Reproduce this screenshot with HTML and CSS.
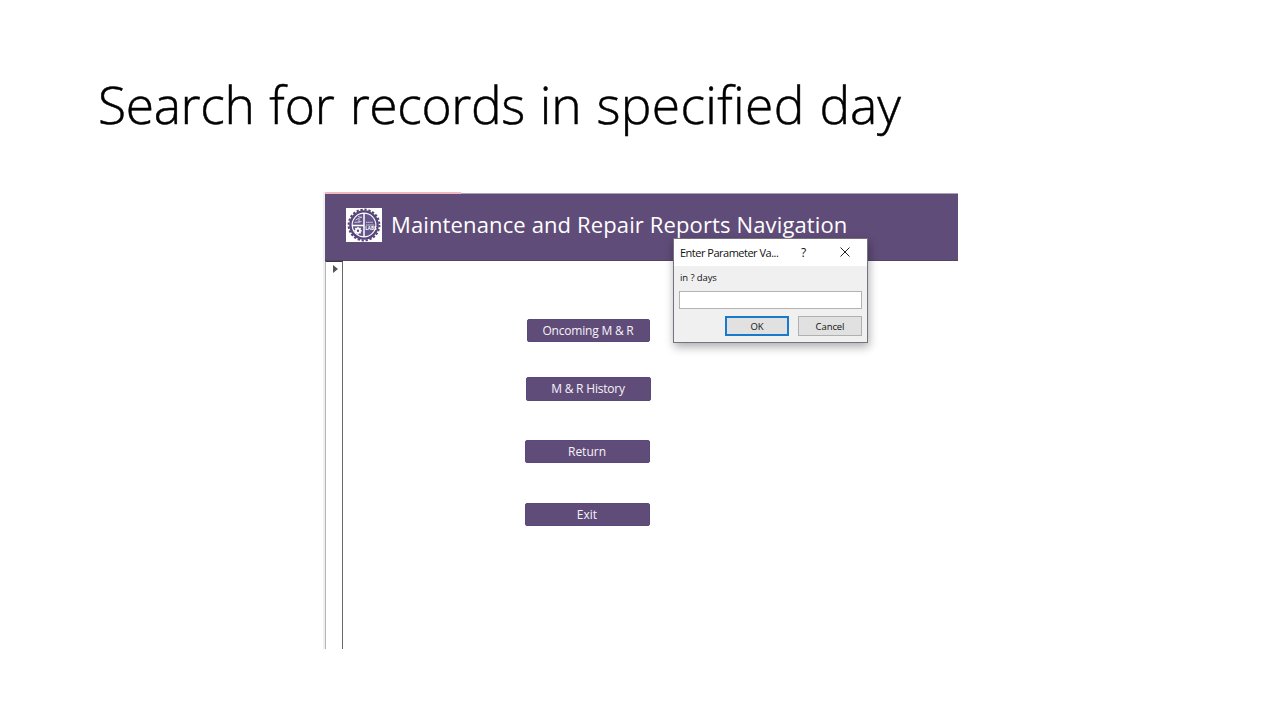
FILE: index.html
```html
<!DOCTYPE html>
<html lang="en">
<head>
<meta charset="utf-8">
<title>Search for records in specified day</title>
<link rel="stylesheet" href="styles.css">
</head>
<body>
<main class="slide">
  <h1 class="slide-title"><span class="tight">Search</span> for <span class="tight">records</span> in <span class="wide">specified</span> day</h1>
  <section class="app">
    <div class="tab-edge"><span class="tab-active"></span></div>
    <header class="app-header">
      <svg class="logo" viewBox="0 0 36 34">
        <rect width="36" height="34" fill="#fff"/>
        <circle cx="18" cy="17" r="15.400" fill="none" stroke="#57467a" stroke-width="2" stroke-dasharray="2.300 1.730"/>
        <circle cx="18" cy="17" r="13.600" fill="#fff" stroke="#57467a" stroke-width="2.400"/>
        <circle cx="18" cy="17" r="11.300" fill="#65568a"/>
        <path d="M18 5v24M6 17.500h12" stroke="#fff" stroke-width="1.500"/>
        <path d="M8.500 14.500l7-1M9.500 12l6-3M12 8.500l4 1M13 11v4" stroke="#d5cee2" stroke-width=".9" fill="none"/>
        <path d="M12 19v7.400M8.300 22.700h7.400M9.400 20.100l5.200 5.200M14.600 20.100l-5.200 5.200" stroke="#fff" stroke-width="1.500"/>
        <circle cx="12" cy="22.700" r="2" fill="#57467a" stroke="#fff" stroke-width="1.600"/>
        <path d="M20 14.300h7M20 17h8" stroke="#d9d3e5" stroke-width="1" stroke-dasharray="1.600 .5"/>
        <text x="19.300" y="22.300" class="logo-text">LABS</text>
      </svg>
      <h2 class="app-title">Maintenance and Repair Reports Navigation</h2>
    </header>
    <div class="app-body">
      <div class="record-selector">
        <svg class="arrow" viewBox="0 0 5 8"><path d="M0 0l5 4-5 4z" fill="#555"/></svg>
      </div>
      <nav class="menu">
        <button class="nav-btn first">Oncoming M &amp; R</button>
        <button class="nav-btn second">M &amp; R History</button>
        <button class="nav-btn third">Return</button>
        <button class="nav-btn fourth">Exit</button>
      </nav>
    </div>
    <div class="dialog" role="dialog">
      <div class="dialog-bar">
        <span class="dialog-title">Enter Parameter Va...</span>
        <span class="help">?</span>
        <svg class="close" viewBox="0 0 10 10"><path d="M.5 .5l9 9M9.500 .5l-9 9" stroke="#222" fill="none"/></svg>
      </div>
      <div class="dialog-body">
        <label class="prompt" for="days">in ? days</label>
        <input class="field" id="days">
        <div class="actions">
          <button class="btn default">OK</button>
          <button class="btn">Cancel</button>
        </div>
      </div>
    </div>
  </section>
</main>
</body>
</html>
```
FILE: styles.css
```css
* { box-sizing: border-box; }
body { margin: 0; background: #fff; font-family: "Open Sans", "Noto Sans", sans-serif; }
.slide { width: 1280px; height: 720px; padding: 67px 0 0 98px; overflow: hidden; }
.slide-title { margin: 0 0 49px; height: 76px; width: max-content; font-size: 51.500px; font-weight: 300; line-height: 75px; color: #000; white-space: nowrap; letter-spacing: -.02px; word-spacing: 1.400px; -webkit-text-stroke: .5px #000; }
.tight { letter-spacing: -.35px; }
.wide { letter-spacing: .35px; }
.app { position: relative; width: 635px; height: 457px; margin-left: 225px; border-left: 2px solid #eef0f3; }
.tab-edge { height: 2px; border-bottom: 1px solid #a9a2b5; }
.tab-active { display: block; width: 136px; height: 2px; background: #f2b8c0; }
.app-header { display: flex; align-items: flex-start; height: 67px; padding: 14px 0 0 21px; background: #604c78; border-bottom: 1px solid #514560; }
.logo { width: 36px; height: 34px; flex: none; }
.logo-text { font: 700 4.500px "Open Sans", sans-serif; fill: #fff; }
.app-title { margin: 0 0 0 9px; font-size: 22px; font-weight: 400; line-height: 32px; color: #fff; white-space: nowrap; letter-spacing: .13px; }
.app-body { display: flex; height: 388px; }
.record-selector { width: 18px; border-left: 1px solid #b5b5b5; border-right: 1px solid #686868; border-top: 1px solid #3c3545; padding: 3px 0 0 7px; }
.arrow { display: block; width: 5px; height: 8px; }
.menu { display: flex; flex-direction: column; padding: 58px 0 0 182px; }
.nav-btn { width: 125px; height: 23px; padding: 0 1px 0 0; border: 1px solid #57497c; border-radius: 2px; background: #604c78; color: #f6f3f9; font: 400 12px/20px "Open Sans", sans-serif; }
.first { width: 123px; margin: 0 0 35px 2px; letter-spacing: -.2px; }
.second { height: 24px; margin: 0 0 39px 1px; letter-spacing: -.2px; }
.third { margin-bottom: 40px; }
.dialog { position: absolute; left: 348px; top: 46px; width: 195px; height: 105px; background: #f0f0f0; border: 1px solid #77717f; box-shadow: 1px 4px 9px rgba(0,0,0,.32); color: #111; }
.dialog-bar { display: flex; align-items: center; height: 27px; padding: 0 0 1px 6px; background: #fff; font-size: 11px; }
.dialog-title { width: 120px; white-space: nowrap; letter-spacing: -.5px; }
.help { width: 19px; padding-left: 1px; font-size: 12px; }
.close { width: 10px; height: 10px; margin-left: 21px; }
.dialog-body { display: flex; flex-direction: column; padding: 5px 5px 0; }
.prompt { height: 14px; font: 9.500px/14px "Open Sans", sans-serif; padding-left: 1px; letter-spacing: -.1px; }
.field { width: 183px; height: 18px; margin-top: 6px; border: 1px solid #b2b2b2; background: #fff; padding: 0 3px; font-size: 10px; }
.actions { display: flex; justify-content: flex-end; gap: 9px; margin-top: 7px; }
.btn { width: 64px; height: 20px; padding: 1px 0 0; border: 1px solid #b0b0b0; background: #e1e1e1; color: #111; font: 9.500px/16px "Open Sans", sans-serif; letter-spacing: -.1px; }
.default { border: 2px solid #1979ca; }
```
